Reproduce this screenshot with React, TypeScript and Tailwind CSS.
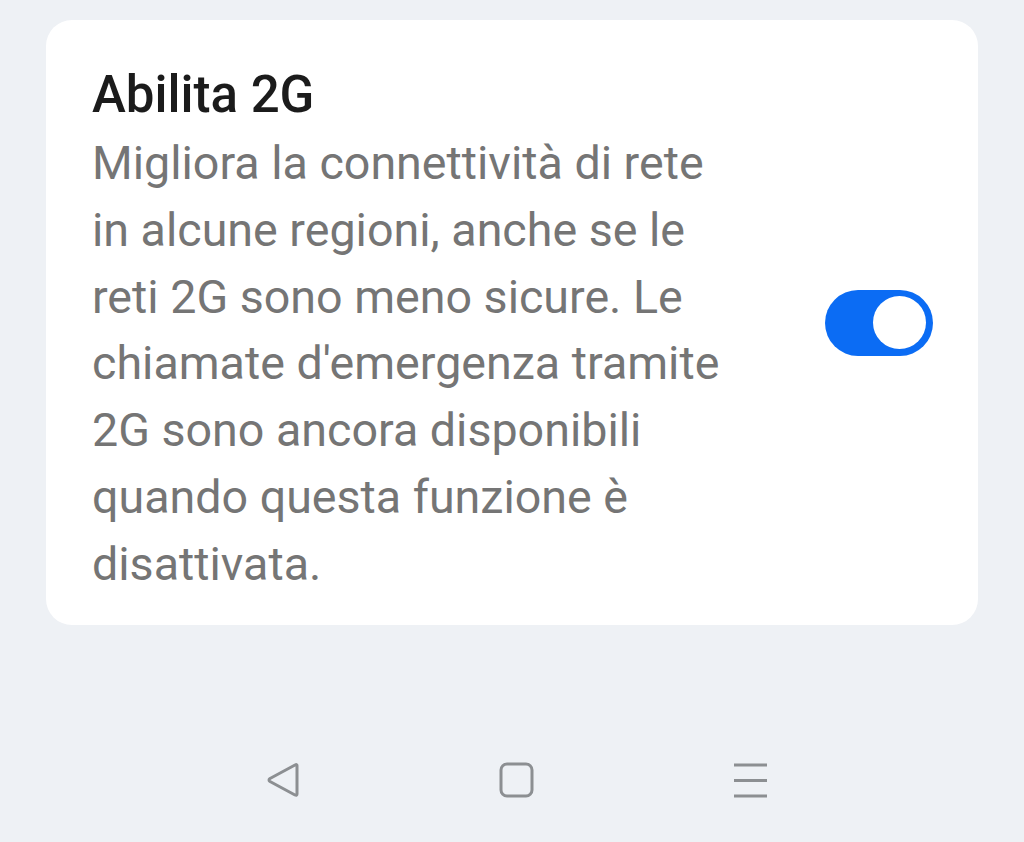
import React from 'react';

const lines = [
  'Migliora la connettività di rete',
  'in alcune regioni, anche se le',
  'reti 2G sono meno sicure. Le',
  "chiamate d'emergenza tramite",
  '2G sono ancora disponibili',
  'quando questa funzione è',
  'disattivata.',
];

export default function App() {
  return (
    <div className="w-[1024px] h-[842px] bg-[#eef1f5] flex flex-col overflow-hidden" style={{ fontFamily: 'Roboto, "Noto Sans", sans-serif' }}>
      {/* card */}
      <div className="mt-[20px] mx-[46px] h-[605px] bg-white rounded-[26px] flex items-center pl-[46px] pr-[45px]">
        <div className="flex-1 self-start pt-[40px]">
          <div className="text-[51px] leading-[70px] font-medium text-[#1b1b1b]">Abilita 2G</div>
          <div className="text-[46.6px] leading-[66.8px] text-[#757575]">
            {lines.map((l) => (
              <div key={l} className="whitespace-nowrap">{l}</div>
            ))}
          </div>
        </div>
        <div className="w-[108px] h-[66px] rounded-full bg-[#0b6cf4] flex items-center justify-end pr-[7px]">
          <div className="w-[53px] h-[53px] rounded-full bg-white" />
        </div>
      </div>

      {/* nav bar */}
      <div className="mt-[137px] flex items-center pl-[266px] gap-[197px] text-[#8c8f92]">
        <svg width="36" height="36" viewBox="0 0 36 36" fill="none" stroke="currentColor" strokeWidth="3" strokeLinejoin="round">
          <path d="M31 3.5 L31 32 Q31 34 29 33 L4 19.5 Q2 18 4 16.5 L29 3 Q31 2 31 3.5 Z" />
        </svg>
        <svg width="36" height="36" viewBox="0 0 36 36" fill="none" stroke="currentColor" strokeWidth="3">
          <rect x="2" y="2" width="31" height="32" rx="6" />
        </svg>
        <svg width="36" height="36" viewBox="0 0 36 36" fill="none" stroke="currentColor" strokeWidth="3">
          <path d="M2 3 H35 M2 18.5 H35 M2 34 H35" />
        </svg>
      </div>
    </div>
  );
}
